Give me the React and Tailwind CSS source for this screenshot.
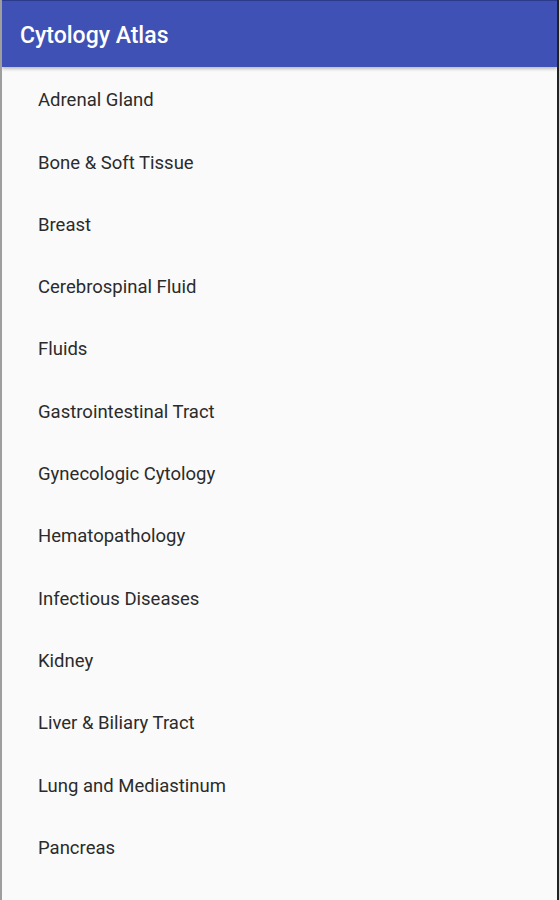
import React from "react";

const sections = [
  "Adrenal Gland",
  "Bone & Soft Tissue",
  "Breast",
  "Cerebrospinal Fluid",
  "Fluids",
  "Gastrointestinal Tract",
  "Gynecologic Cytology",
  "Hematopathology",
  "Infectious Diseases",
  "Kidney",
  "Liver & Biliary Tract",
  "Lung and Mediastinum",
  "Pancreas",
];

const App = () => {
  return (
    <div className="h-[900px] w-[559px] overflow-hidden bg-[#fafafa] border-l-2 border-l-[#9e9e9e] border-r-2 border-r-[#222] font-['Roboto',sans-serif] flex flex-col">
      <header className="h-[67px] shrink-0 bg-[#3f51b5] border-t border-t-[#2c3a8c] flex items-center pl-[18px] pt-[5px] shadow-[0_2px_3px_rgba(0,0,0,0.25)] z-10">
        <h1 className="text-white text-[23px] font-medium">Cytology Atlas</h1>
      </header>

      <ul className="flex flex-col pt-[3px]">
        {sections.map((name) => (
          <li
            key={name}
            className="h-[62.3px] shrink-0 flex items-center pl-9 text-[18.5px] text-[#2b2b2b]"
          >
            {name}
          </li>
        ))}
      </ul>
    </div>
  );
};

export default App;
